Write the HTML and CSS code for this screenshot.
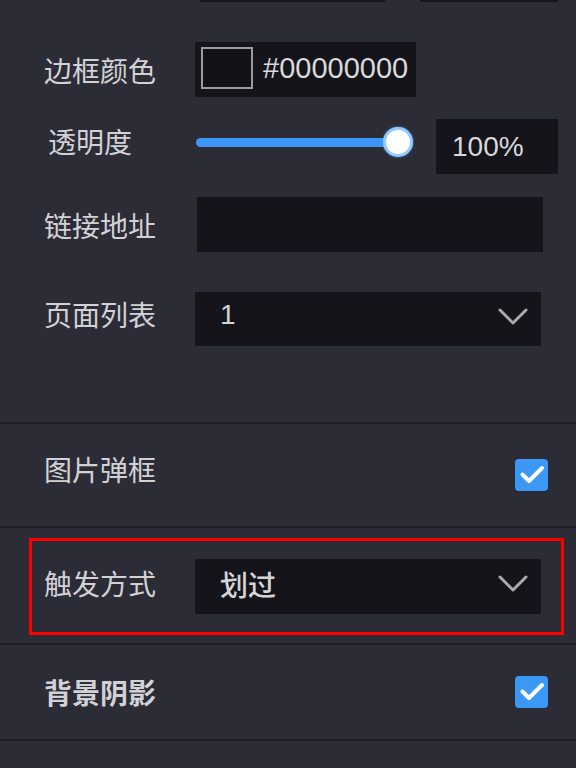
FILE: index.html
```html
<!DOCTYPE html>
<html lang="zh">
<head>
<meta charset="utf-8">
<link rel="stylesheet" href="styles.css">
</head>
<body>
<div class="panel">
  <section class="group group-top">
    <div class="top-row">
      <div class="stub stub-a"></div>
      <div class="stub stub-b"></div>
    </div>
    <div class="row row-color">
      <div class="label">边框颜色</div>
      <div class="color-field">
        <span class="swatch"></span>
        <span class="hex">#00000000</span>
      </div>
    </div>
    <div class="row row-opacity">
      <div class="label label-shift">透明度</div>
      <div class="slider">
        <div class="track"></div>
        <div class="thumb"></div>
      </div>
      <div class="num-field">100%</div>
    </div>
    <div class="row row-link">
      <div class="label">链接地址</div>
      <div class="text-field"></div>
    </div>
    <div class="row row-pages">
      <div class="label">页面列表</div>
      <div class="select">
        <span class="select-value">1</span>
        <svg class="chevron" viewBox="0 0 30 17" width="30" height="17"><polyline points="2,2 15,15 28,2" fill="none" stroke="#a9a9ae" stroke-width="3" stroke-linecap="round" stroke-linejoin="round"/></svg>
      </div>
    </div>
  </section>

  <section class="group group-popup">
    <div class="row row-check">
      <div class="label">图片弹框</div>
      <span class="checkbox"><svg viewBox="0 0 32 32" width="32" height="32"><polyline points="6.5,15.5 13,22 26,9" fill="none" stroke="#fff" stroke-width="4" stroke-linecap="round" stroke-linejoin="round"/></svg></span>
    </div>
  </section>

  <section class="group group-trigger">
    <div class="highlight">
      <div class="label">触发方式</div>
      <div class="select">
        <span class="select-value strong">划过</span>
        <svg class="chevron" viewBox="0 0 30 17" width="30" height="17"><polyline points="2,2 15,15 28,2" fill="none" stroke="#a9a9ae" stroke-width="3" stroke-linecap="round" stroke-linejoin="round"/></svg>
      </div>
    </div>
  </section>

  <section class="group group-shadow">
    <div class="row row-check">
      <div class="label bold">背景阴影</div>
      <span class="checkbox"><svg viewBox="0 0 32 32" width="32" height="32"><polyline points="6.5,15.5 13,22 26,9" fill="none" stroke="#fff" stroke-width="4" stroke-linecap="round" stroke-linejoin="round"/></svg></span>
    </div>
  </section>
</div>
</body>
</html>
```

FILE: styles.css
```css
* { box-sizing: border-box; }

html, body {
  margin: 0;
  padding: 0;
  background: #2c2c37;
  height: 768px;
  overflow: hidden;
}

body {
  font-family: "Noto Sans CJK SC", "Liberation Sans", sans-serif;
  color: #d2d2d6;
}

.panel {
  width: 576px;
}

.group {
  border-bottom: 2px solid #1c1c23;
}

.group-top {
  padding-bottom: 76px;
}

.top-row {
  display: flex;
  height: 2px;
  overflow: visible;
  align-items: flex-end;
}

.stub {
  height: 40px;
  flex: none;
  background: #15151b;
}

.stub-a {
  margin-left: 200px;
  width: 185px;
}

.stub-b {
  margin-left: 35px;
  width: 138px;
}

.row {
  display: flex;
  align-items: center;
  padding-left: 44px;
}

.label {
  width: 151px;
  flex: none;
  font-size: 28px;
  line-height: 28px;
  margin-bottom: 6px;
  white-space: nowrap;
}

.label-shift {
  padding-left: 4px;
}

.bold {
  font-weight: 700;
}

.row-color {
  margin-top: 40px;
  height: 55px;
}

.row-color .label {
  margin-bottom: 0;
}

.color-field {
  width: 221px;
  height: 55px;
  background: #14141a;
  display: flex;
  align-items: center;
  padding-left: 6px;
  gap: 10px;
}

.swatch {
  width: 52px;
  height: 42px;
  border: 2px solid #9c9ca0;
  background: #121217;
  flex: none;
  margin-top: -3px;
}

.hex {
  font-family: "Liberation Sans", Arial, sans-serif;
  font-size: 29px;
  line-height: 1;
  color: #d9d9dc;
  margin-top: -3px;
}

.row-opacity {
  margin-top: 22px;
  height: 55px;
}

.row-opacity .label {
  margin-bottom: 12px;
}

.slider {
  position: relative;
  width: 218px;
  height: 30px;
  margin-left: 1px;
  margin-bottom: 9px;
  flex: none;
}

.track {
  position: absolute;
  left: 0;
  right: 15px;
  top: 11px;
  height: 9px;
  border-radius: 5px;
  background: #3b96f5;
}

.thumb {
  position: absolute;
  right: 1px;
  top: 0;
  width: 30px;
  height: 30px;
  border-radius: 50%;
  background: #fff;
  border: 3px solid #93caff;
  box-shadow: 0 0 2px #5fb0ff;
}

.num-field {
  margin-left: 22px;
  width: 122px;
  height: 55px;
  background: #14141a;
  font-family: "Liberation Sans", Arial, sans-serif;
  font-size: 28px;
  line-height: 55px;
  padding-left: 16px;
  color: #d9d9dc;
}

.row-link {
  margin-top: 23px;
  height: 55px;
}

.row-link .label {
  margin-bottom: 0;
}

.text-field {
  margin-left: 2px;
  width: 346px;
  height: 55px;
  background: #14141a;
}

.row-pages {
  margin-top: 40px;
  height: 54px;
}

.row-pages .label {
  margin-bottom: 10px;
}

.select {
  width: 346px;
  height: 55px;
  flex: none;
  background: #14141a;
  display: flex;
  align-items: center;
  justify-content: space-between;
  padding: 0 13px 0 25px;
}

.row-pages .select {
  height: 54px;
}

.select-value {
  font-family: "Liberation Sans", "Noto Sans CJK SC", sans-serif;
  font-size: 28px;
  line-height: 1;
  color: #d4d4d8;
  margin-top: -8px;
}

.select-value.strong {
  font-family: "Noto Sans CJK SC", sans-serif;
  font-weight: 500;
  margin-top: -6px;
}

.chevron {
  display: block;
  margin-top: -6px;
}

.group-popup {
  height: 104px;
}

.row-check {
  height: 100%;
  justify-content: space-between;
  padding-right: 28px;
}

.group-popup .row-check .label {
  margin-bottom: 12px;
}

.checkbox {
  width: 33px;
  height: 32px;
  border-radius: 4px;
  background: #3b98f5;
  display: flex;
  align-items: center;
  justify-content: center;
  flex: none;
}

.checkbox svg {
  display: block;
}

.group-trigger {
  padding: 10px 0 8px;
}

.highlight {
  margin-left: 29px;
  width: 535px;
  border: 3px solid #ff0000;
  padding: 18px 0 18px 12px;
  display: flex;
  align-items: center;
}

.highlight .label {
  margin-bottom: 8px;
}

.group-shadow {
  height: 96px;
}

.group-shadow .row-check .label {
  margin-bottom: 0;
}
```
